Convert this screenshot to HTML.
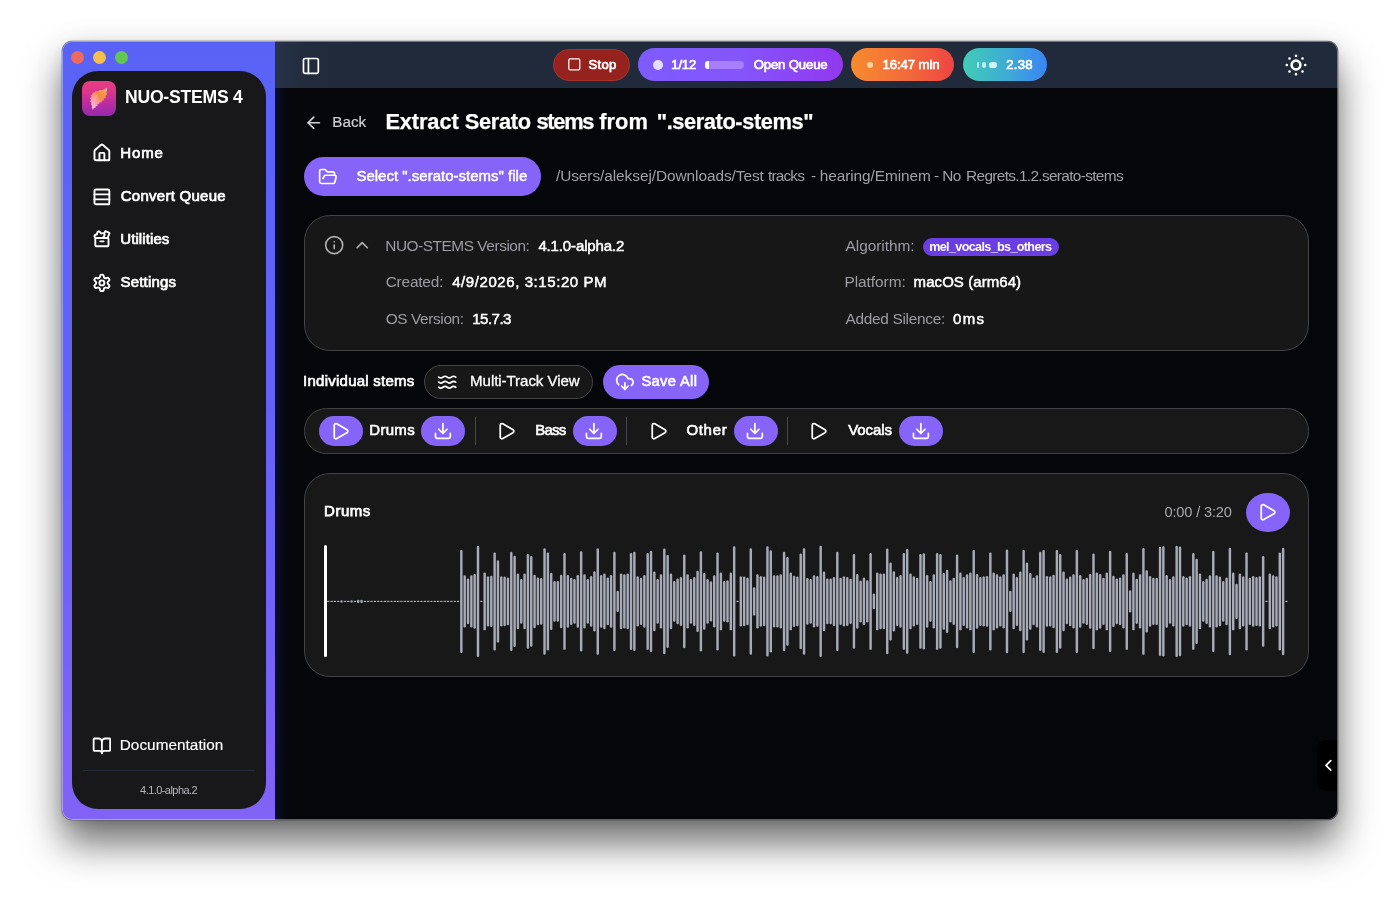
<!DOCTYPE html>
<html lang="en"><head><meta charset="utf-8"><title>NUO-STEMS 4</title>
<style>
html,body{margin:0;padding:0;background:#fff;}
body{width:1400px;height:901px;position:relative;overflow:hidden;font-family:"Liberation Sans",sans-serif;}
#sh{position:absolute;left:62px;top:41px;width:1276.4px;height:779px;border-radius:10.5px;background:#555;
 box-shadow:0 0 0 0.6px rgba(0,0,0,.3),0 24px 38px 0 rgba(0,0,0,.55),0 3px 10px rgba(0,0,0,.10),0 0 34px rgba(0,0,0,.05);}
#w{will-change:transform;position:absolute;left:0;top:0;width:1400px;height:901px;clip-path:inset(41px 62px 81px 62px round 10.5px);}
.b,.i,.t{position:absolute;}
.b{box-sizing:border-box;}
.t{white-space:nowrap;line-height:1;transform:translateY(-50%);}
</style></head>
<body>
<div id="sh"></div>
<div id="w">
<div class="b" style="left:62px;top:41px;width:1278px;height:780px;background:#050609;"></div>
<div class="b" style="left:275px;top:88px;width:18px;height:732px;background:linear-gradient(90deg,#0b0f34 0,#080b1f 22%,#06070e 60%,#050609 100%);"></div>
<div class="b" style="left:62px;top:41px;width:213px;height:779px;background:linear-gradient(180deg,#5a62f6 0,#6362f6 45%,#8163f5 100%);"></div>
<div class="b" style="left:275px;top:41px;width:1065px;height:47px;background:linear-gradient(90deg,#27324a 0,#222b3c 3%,#212a3a 8%);"></div>
<div class="b" style="left:71.10000000000001px;top:51.1px;width:13.2px;height:13.2px;border-radius:50%;background:#ed6a5f;"></div>
<div class="b" style="left:93.2px;top:51.1px;width:13.2px;height:13.2px;border-radius:50%;background:#f5bf4f;"></div>
<div class="b" style="left:115.30000000000001px;top:51.1px;width:13.2px;height:13.2px;border-radius:50%;background:#62c554;"></div>
<div class="b" style="left:72px;top:71px;width:193.5px;height:738px;background:#18181b;border-radius:26px;"></div>
<div class="b" style="left:82.4px;top:81px;width:33.7px;height:34.8px;border-radius:8px;background:linear-gradient(178deg,#ec3c80 0,#d83590 35%,#b52ca2 68%,#9229ae 100%);"></div>
<svg class="i" style="left:82.4px;top:81px" width="34" height="35" viewBox="0 0 34 35"><defs><linearGradient id="lf" x1="0.1" y1="1" x2="0.9" y2="0"><stop offset="0" stop-color="#ffd9f0"/><stop offset=".3" stop-color="#ff9fb4"/><stop offset=".62" stop-color="#f58a3a"/><stop offset=".9" stop-color="#f2a25e"/><stop offset="1" stop-color="#9ad0a4"/></linearGradient><filter id="lb" x="-20%" y="-20%" width="140%" height="140%"><feGaussianBlur stdDeviation=".45"/></filter></defs><path filter="url(#lb)" d="M24.600 6.600 L22 8.400 19 9.200 17.400 9 16.600 10 13.200 10.300 12.600 11.600 10.800 11.800 10.400 13.600 8.800 14.400 9.600 15.800 8 17.400 9.200 18.600 8.200 20.400 9.600 21.600 9 23.400 10.200 24.600 10 26.600 10.700 29 12 26.600 13.200 27.200 13.800 25 15.200 25.200 15.600 23 17.200 23 17.600 21.200 19.400 21.400 20 19.800 21.800 19.400 22 17.600 23.800 16.800 23.600 14.800 25 13.400 24.400 11.600 25.200 9.800z" fill="url(#lf)"/><path d="M15.500 13.500c-1.600 2-2.800 5-3.400 8.500" stroke="#f7c6c0" stroke-width=".9" fill="none" opacity=".7" stroke-linecap="round"/></svg>
<span class="t" id="t1" style="left:124.95px;top:98.31px;font-size:17.6px;color:#fff;font-weight:700;letter-spacing:-0.23px;">NUO-STEMS 4</span>
<svg class="i" style="left:91.5px;top:143.4px" width="19.8" height="19.8" viewBox="0 0 24 24" fill="none" stroke="#fff" stroke-width="2.3" stroke-linecap="round" stroke-linejoin="round"><path d="M15 21v-8a1 1 0 0 0-1-1h-4a1 1 0 0 0-1 1v8"/><path d="M3 10a2 2 0 0 1 .709-1.528l7-5.999a2 2 0 0 1 2.582 0l7 5.999A2 2 0 0 1 21 10v9a2 2 0 0 1-2 2H5a2 2 0 0 1-2-2z"/></svg>
<span class="t" id="t2" style="left:120.13px;top:151.78px;font-size:15.0px;color:#fff;letter-spacing:0.934px;-webkit-text-stroke:0.7px #fff;">Home</span>
<svg class="i" style="left:91.5px;top:186.6px" width="19.8" height="19.8" viewBox="0 0 24 24" fill="none" stroke="#fff" stroke-width="2.3" stroke-linecap="round" stroke-linejoin="round"><rect width="18" height="18" x="3" y="3" rx="2"/><path d="M21 9H3"/><path d="M21 15H3"/></svg>
<span class="t" id="t3" style="left:120.69px;top:194.78px;font-size:15.0px;color:#fff;letter-spacing:0.267px;-webkit-text-stroke:0.7px #fff;">Convert Queue</span>
<svg class="i" style="left:91.5px;top:229.4px" width="19.8" height="19.8" viewBox="0 0 24 24" fill="none" stroke="#fff" stroke-width="2.3" stroke-linecap="round" stroke-linejoin="round"><path d="M10 15h4"/><path d="m14.817 10.995-.971-1.450 1.034-1.232a2 2 0 0 0-2.025-3.238l-1.820.364L9.910 3.885a2 2 0 0 0-3.625.748L6.141 6.550l-1.725.426a2 2 0 0 0-.190 3.756l.657.270"/><path d="m18.822 10.995 2.260-5.380a1 1 0 0 0-.557-1.318L16.954 2.900a1 1 0 0 0-1.281.533l-.924 2.122"/><path d="M4 12.006A1 1 0 0 1 4.994 11H19a1 1 0 0 1 1 1v7a2 2 0 0 1-2 2H6a2 2 0 0 1-2-2z"/></svg>
<span class="t" id="t4" style="left:120.23px;top:237.98px;font-size:15.0px;color:#fff;letter-spacing:0.098px;-webkit-text-stroke:0.7px #fff;">Utilities</span>
<svg class="i" style="left:91.5px;top:272.8px" width="19.8" height="19.8" viewBox="0 0 24 24" fill="none" stroke="#fff" stroke-width="2.3" stroke-linecap="round" stroke-linejoin="round"><path d="M12.22 2h-.44a2 2 0 0 0-2 2v.18a2 2 0 0 1-1 1.730l-.43.250a2 2 0 0 1-2 0l-.15-.080a2 2 0 0 0-2.730.730l-.22.380a2 2 0 0 0 .730 2.730l.15.100a2 2 0 0 1 1 1.720v.510a2 2 0 0 1-1 1.740l-.15.090a2 2 0 0 0-.730 2.730l.22.380a2 2 0 0 0 2.730.730l.15-.080a2 2 0 0 1 2 0l.43.250a2 2 0 0 1 1 1.730V20a2 2 0 0 0 2 2h.44a2 2 0 0 0 2-2v-.18a2 2 0 0 1 1-1.730l.43-.250a2 2 0 0 1 2 0l.15.080a2 2 0 0 0 2.730-.730l.22-.390a2 2 0 0 0-.730-2.730l-.15-.080a2 2 0 0 1-1-1.740v-.500a2 2 0 0 1 1-1.740l.15-.090a2 2 0 0 0 .730-2.730l-.22-.380a2 2 0 0 0-2.730-.730l-.15.080a2 2 0 0 1-2 0l-.43-.250a2 2 0 0 1-1-1.730V4a2 2 0 0 0-2-2z"/><circle cx="12" cy="12" r="3"/></svg>
<span class="t" id="t5" style="left:120.61px;top:281.18px;font-size:15.0px;color:#fff;letter-spacing:0.16px;-webkit-text-stroke:0.7px #fff;">Settings</span>
<svg class="i" style="left:91.55px;top:735.65px" width="19.8" height="19.8" viewBox="0 0 24 24" fill="none" stroke="#fff" stroke-width="2.2" stroke-linecap="round" stroke-linejoin="round"><path d="M12 7v14"/><path d="M3 18a1 1 0 0 1-1-1V4a1 1 0 0 1 1-1h5a4 4 0 0 1 4 4 4 4 0 0 1 4-4h5a1 1 0 0 1 1 1v13a1 1 0 0 1-1 1h-6a3 3 0 0 0-3 3 3 3 0 0 0-3-3z"/></svg>
<span class="t" id="t6" style="left:119.74px;top:745.1px;font-size:15.3px;color:#fff;letter-spacing:0.051px;-webkit-text-stroke:0.15px #fff;">Documentation</span>
<div class="b" style="left:83px;top:770.4px;width:172px;height:1.1px;background:#242b3a;"></div>
<span class="t" id="t7" style="left:140.1px;top:789.91px;font-size:11px;color:#b4b4bb;letter-spacing:-0.558px;">4.1.0-alpha.2</span>
<svg class="i" style="left:301.1px;top:55.5px" width="19.8" height="19.8" viewBox="0 0 24 24" fill="none" stroke="#fff" stroke-width="2.05" stroke-linecap="round" stroke-linejoin="round"><rect width="18" height="18" x="3" y="3" rx="2"/><path d="M9 3v18"/></svg>
<div class="b" style="left:553.3px;top:49px;width:76.3px;height:31.8px;border-radius:16px;background:#96221e;border:1px solid #a9312b;"></div>
<svg class="i" style="left:566.6px;top:57.2px" width="14.6" height="14.6" viewBox="0 0 24 24" fill="none" stroke="#fff" stroke-width="2.05" stroke-linecap="round" stroke-linejoin="round"><rect width="18" height="18" x="3" y="3" rx="2"/></svg>
<span class="t" id="t8" style="left:588.61px;top:64.83px;font-size:13.1px;color:#fff;letter-spacing:0.268px;-webkit-text-stroke:0.7px #fff;">Stop</span>
<div class="b" style="left:638px;top:48px;width:204.5px;height:33.4px;border-radius:17px;background:linear-gradient(90deg,#7e5bff 0,#8455fb 50%,#9238ee 100%);"></div>
<div class="b" style="left:652.6px;top:60.2px;width:10px;height:10px;border-radius:50%;background:#e6defe;"></div>
<span class="t" id="t9" style="left:671.34px;top:64.83px;font-size:13.1px;color:#fff;letter-spacing:-0.21px;-webkit-text-stroke:0.7px #fff;">1/12</span>
<div class="b" style="left:705.2px;top:61.2px;width:39px;height:7.8px;border-radius:4px;background:#a77efc;"></div>
<div class="b" style="left:705.2px;top:61.2px;width:4.2px;height:7.8px;border-radius:4px 1px 1px 4px;background:#fff;"></div>
<span class="t" id="t10" style="left:753.7px;top:64.83px;font-size:13.1px;color:#fff;letter-spacing:-0.119px;-webkit-text-stroke:0.7px #fff;">Open Queue</span>
<div class="b" style="left:851px;top:48.4px;width:103px;height:32.6px;border-radius:17px;background:linear-gradient(90deg,#f78b2f 0,#f26a3b 55%,#ee4543 100%);"></div>
<div class="b" style="left:866.5px;top:61.6px;width:6.9px;height:6.9px;border-radius:50%;background:#fdd3a6;"></div>
<span class="t" id="t11" style="left:882.5px;top:64.83px;font-size:13.1px;color:#fff;letter-spacing:-0.05px;-webkit-text-stroke:0.7px #fff;">16:47 min</span>
<div class="b" style="left:962.7px;top:48.4px;width:84.6px;height:32.6px;border-radius:17px;background:linear-gradient(90deg,#41ccb6 0,#3eaad6 55%,#3b84f5 100%);"></div>
<div class="b" style="left:977.3px;top:62.2px;width:1.8px;height:5.6px;border-radius:1px;background:#a9ecee;"></div>
<div class="b" style="left:981.6px;top:62.2px;width:4.4px;height:5.6px;border-radius:2.5px;background:#bff1f3;"></div>
<div class="b" style="left:988.8px;top:62.2px;width:7.8px;height:5.6px;border-radius:2.8px;background:#d4f6f8;"></div>
<span class="t" id="t12" style="left:1006.33px;top:64.83px;font-size:13.1px;color:#fff;letter-spacing:0.235px;-webkit-text-stroke:0.7px #fff;">2.38</span>
<svg class="i" style="left:1282.7px;top:51.5px" width="26" height="26" viewBox="0 0 26 26" fill="none" stroke="#fff" stroke-linecap="round"><circle cx="13" cy="13" r="4.400" stroke-width="2.600"/><g stroke-width="2.700"><path d="M13 3.800h.01M13 22.200h.01M3.800 13h.01M22.200 13h.01M6.500 6.500h.01M19.500 6.500h.01M6.500 19.500h.01M19.500 19.500h.01"/></g></svg>
<svg class="i" style="left:303.75px;top:112.85px" width="19.5" height="19.5" viewBox="0 0 24 24" fill="none" stroke="#d4d4d8" stroke-width="2.05" stroke-linecap="round" stroke-linejoin="round"><path d="m12 19-7-7 7-7"/><path d="M19 12H5"/></svg>
<span class="t" id="t13" style="left:332.23px;top:121.91px;font-size:15.2px;color:#d0d0d5;letter-spacing:0.063px;-webkit-text-stroke:0.2px #d0d0d5;">Back</span>
<span class="g"><span class="t" id="t14" style="left:385.42px;top:122.33px;font-size:21.8px;color:#fff;font-weight:700;letter-spacing:-0.11px;-webkit-text-stroke:0.25px #fff;">Extract</span> <span class="t" id="t15" style="left:464.73px;top:122.32px;font-size:21.8px;color:#fff;font-weight:700;letter-spacing:-0.281px;-webkit-text-stroke:0.25px #fff;">Serato</span> <span class="t" id="t16" style="left:536.56px;top:122.33px;font-size:21.8px;color:#fff;font-weight:700;letter-spacing:-1.306px;-webkit-text-stroke:0.25px #fff;">stems</span> <span class="t" id="t17" style="left:599.16px;top:122.32px;font-size:21.8px;color:#fff;font-weight:700;letter-spacing:0.098px;-webkit-text-stroke:0.25px #fff;">from</span> <span class="t" id="t18" style="left:656.8px;top:122.33px;font-size:21.8px;color:#fff;font-weight:700;letter-spacing:-0.409px;-webkit-text-stroke:0.25px #fff;">".serato-stems"</span></span>
<div class="b" style="left:304px;top:157px;width:236.8px;height:38.5px;border-radius:20px;background:#8664f7;"></div>
<svg class="i" style="left:317.95px;top:166.5px" width="19.8" height="19.8" viewBox="0 0 24 24" fill="none" stroke="#fff" stroke-width="2.05" stroke-linecap="round" stroke-linejoin="round"><path d="m6 14 1.500-2.900A2 2 0 0 1 9.240 10H20a2 2 0 0 1 1.940 2.500l-1.540 6a2 2 0 0 1-1.950 1.500H4a2 2 0 0 1-2-2V5a2 2 0 0 1 2-2h3.900a2 2 0 0 1 1.690.900l.810 1.200a2 2 0 0 0 1.670.900H18a2 2 0 0 1 2 2v2"/></svg>
<span class="t" id="t19" style="left:356.39px;top:174.96px;font-size:15.0px;color:#fff;letter-spacing:0.007px;-webkit-text-stroke:0.45px #fff;">Select ".serato-stems" file</span>
<span class="g"><span class="t" id="t20" style="left:555.93px;top:176.05px;font-size:15.4px;color:#a0a0a6;letter-spacing:-0.059px;">/Users/aleksej/Downloads/Test</span> <span class="t" id="t21" style="left:768.08px;top:176.05px;font-size:15.4px;color:#a0a0a6;letter-spacing:-0.84px;">tracks</span> <span class="t" id="t22" style="left:810.97px;top:176.05px;font-size:15.4px;color:#a0a0a6;">-</span> <span class="t" id="t23" style="left:819.73px;top:176.05px;font-size:15.4px;color:#a0a0a6;letter-spacing:-0.071px;">hearing/Eminem</span> <span class="t" id="t24" style="left:933.94px;top:176.05px;font-size:15.4px;color:#a0a0a6;">-</span> <span class="t" id="t25" style="left:942.33px;top:176.05px;font-size:15.4px;color:#a0a0a6;letter-spacing:-0.675px;">No</span> <span class="t" id="t26" style="left:966.04px;top:176.05px;font-size:15.4px;color:#a0a0a6;letter-spacing:-0.662px;">Regrets.1.2.serato-stems</span></span>
<div class="b" style="left:304px;top:214.5px;width:1004.8px;height:136px;border-radius:26px;background:#171717;border:1.2px solid #434346;"></div>
<svg class="i" style="left:323.6px;top:234.55px" width="20.4" height="20.4" viewBox="0 0 24 24" fill="none" stroke="#adadb0" stroke-width="1.95" stroke-linecap="round" stroke-linejoin="round"><circle cx="12" cy="12" r="10"/><path d="M12 16v-4"/><path d="M12 8h.01"/></svg>
<svg class="i" style="left:352.3px;top:234.55px" width="20.4" height="20.4" viewBox="0 0 24 24" fill="none" stroke="#adadb0" stroke-width="2.05" stroke-linecap="round" stroke-linejoin="round"><path d="m18 15-6-6-6 6"/></svg>
<span class="t" id="t27" style="left:385.23px;top:245.77px;font-size:15.4px;color:#9c9ca3;letter-spacing:-0.447px;">NUO-STEMS Version:</span>
<span class="t" id="t28" style="left:538.39px;top:244.78px;font-size:15.0px;color:#fff;letter-spacing:-0.134px;-webkit-text-stroke:0.5px #fff;">4.1.0-alpha.2</span>
<span class="t" id="t29" style="left:845.5px;top:245.77px;font-size:15.4px;color:#9c9ca3;letter-spacing:-0.015px;">Algorithm:</span>
<span class="t" id="t30" style="left:385.67px;top:281.97px;font-size:15.4px;color:#9c9ca3;letter-spacing:-0.184px;">Created:</span>
<span class="t" id="t31" style="left:452.18px;top:280.98px;font-size:15.0px;color:#fff;letter-spacing:0.578px;-webkit-text-stroke:0.5px #fff;">4/9/2026, 3:15:20 PM</span>
<span class="t" id="t32" style="left:844.48px;top:281.97px;font-size:15.4px;color:#9c9ca3;letter-spacing:-0.04px;">Platform:</span>
<span class="t" id="t33" style="left:913.6px;top:280.98px;font-size:15.0px;color:#fff;letter-spacing:0.069px;-webkit-text-stroke:0.5px #fff;">macOS (arm64)</span>
<span class="t" id="t34" style="left:385.71px;top:319.17px;font-size:15.4px;color:#9c9ca3;letter-spacing:-0.382px;">OS Version:</span>
<span class="t" id="t35" style="left:472.23px;top:318.16px;font-size:15.0px;color:#fff;letter-spacing:-0.503px;-webkit-text-stroke:0.5px #fff;">15.7.3</span>
<span class="t" id="t36" style="left:845.5px;top:319.17px;font-size:15.4px;color:#9c9ca3;letter-spacing:-0.294px;">Added Silence:</span>
<span class="t" id="t37" style="left:953.02px;top:318.17px;font-size:15.0px;color:#fff;letter-spacing:1.276px;-webkit-text-stroke:0.5px #fff;">0ms</span>
<div class="b" style="left:922.9px;top:238.2px;width:135.8px;height:17.6px;border-radius:9px;background:#6a3ee2;"></div>
<span class="t" id="t38" style="left:929.16px;top:246.85px;font-size:12.6px;color:#fff;font-weight:700;letter-spacing:-0.643px;">mel_vocals_bs_others</span>
<span class="t" id="t39" style="left:303.09px;top:379.75px;font-size:15.0px;color:#fff;letter-spacing:0.242px;-webkit-text-stroke:0.65px #fff;">Individual stems</span>
<div class="b" style="left:424px;top:365px;width:169px;height:33.6px;border-radius:17px;background:#171718;border:1.2px solid #434346;"></div>
<svg class="i" style="left:436.7px;top:371.65px" width="20.4" height="20.4" viewBox="0 0 24 24" fill="none" stroke="#fff" stroke-width="2.05" stroke-linecap="round" stroke-linejoin="round"><path d="M2 6c.6.5 1.200 1 2.500 1C7 7 7 5 9.500 5c2.600 0 2.400 2 5 2 2.500 0 2.500-2 5-2 1.300 0 1.900.5 2.500 1"/><path d="M2 12c.6.5 1.200 1 2.500 1 2.500 0 2.500-2 5-2 2.600 0 2.400 2 5 2 2.500 0 2.500-2 5-2 1.300 0 1.900.5 2.500 1"/><path d="M2 18c.6.5 1.200 1 2.500 1 2.500 0 2.500-2 5-2 2.600 0 2.400 2 5 2 2.500 0 2.500-2 5-2 1.300 0 1.900.5 2.500 1"/></svg>
<span class="t" id="t40" style="left:470.07px;top:381.01px;font-size:15.1px;color:#fff;letter-spacing:-0.071px;-webkit-text-stroke:0.3px #fff;">Multi-Track View</span>
<div class="b" style="left:603px;top:365px;width:105.5px;height:33.6px;border-radius:17px;background:#8664f7;"></div>
<svg class="i" style="left:615.1px;top:372.1px" width="19.8" height="19.8" viewBox="0 0 24 24" fill="none" stroke="#fff" stroke-width="2.05" stroke-linecap="round" stroke-linejoin="round"><path d="M12 13v8l-4-4"/><path d="m12 21 4-4"/><path d="M4.393 15.269A7 7 0 1 1 15.710 8h1.790a4.500 4.500 0 0 1 2.436 8.284"/></svg>
<span class="t" id="t41" style="left:641.42px;top:380.88px;font-size:14.7px;color:#fff;letter-spacing:0.361px;-webkit-text-stroke:0.55px #fff;">Save All</span>
<div class="b" style="left:304px;top:408.4px;width:1004.8px;height:45.6px;border-radius:22.5px;background:#181818;border:1.2px solid #434346;"></div>
<div class="b" style="left:319px;top:416px;width:43.5px;height:30px;border-radius:15px;background:#8664f7;"></div>
<svg class="i" style="left:330.3px;top:420.6px" width="20.4" height="20.4" viewBox="0 0 24 24" fill="none" stroke="#fff" stroke-width="2.05" stroke-linecap="round" stroke-linejoin="round"><path d="M5 5a2 2 0 0 1 3.008-1.728l11.997 6.998a2 2 0 0 1 .003 3.458l-12 7A2 2 0 0 1 5 19z"/></svg>
<span class="t" id="t42" style="left:369.24px;top:429.36px;font-size:15.0px;color:#fff;letter-spacing:0.318px;-webkit-text-stroke:0.6px #fff;">Drums</span>
<div class="b" style="left:421.2px;top:416px;width:44px;height:30px;border-radius:15px;background:#8664f7;"></div>
<svg class="i" style="left:432.75px;top:421px" width="19.8" height="19.8" viewBox="0 0 24 24" fill="none" stroke="#fff" stroke-width="2.05" stroke-linecap="round" stroke-linejoin="round"><path d="M21 15v4a2 2 0 0 1-2 2H5a2 2 0 0 1-2-2v-4"/><polyline points="7 10 12 15 17 10"/><line x1="12" x2="12" y1="15" y2="3"/></svg>
<svg class="i" style="left:496.3px;top:420.6px" width="20.4" height="20.4" viewBox="0 0 24 24" fill="none" stroke="#fff" stroke-width="2.05" stroke-linecap="round" stroke-linejoin="round"><path d="M5 5a2 2 0 0 1 3.008-1.728l11.997 6.998a2 2 0 0 1 .003 3.458l-12 7A2 2 0 0 1 5 19z"/></svg>
<span class="t" id="t43" style="left:535.24px;top:429.36px;font-size:15.0px;color:#fff;letter-spacing:-0.813px;-webkit-text-stroke:0.6px #fff;">Bass</span>
<div class="b" style="left:572.6px;top:416px;width:44px;height:30px;border-radius:15px;background:#8664f7;"></div>
<svg class="i" style="left:584.15px;top:421px" width="19.8" height="19.8" viewBox="0 0 24 24" fill="none" stroke="#fff" stroke-width="2.05" stroke-linecap="round" stroke-linejoin="round"><path d="M21 15v4a2 2 0 0 1-2 2H5a2 2 0 0 1-2-2v-4"/><polyline points="7 10 12 15 17 10"/><line x1="12" x2="12" y1="15" y2="3"/></svg>
<svg class="i" style="left:647.6999999999999px;top:420.6px" width="20.4" height="20.4" viewBox="0 0 24 24" fill="none" stroke="#fff" stroke-width="2.05" stroke-linecap="round" stroke-linejoin="round"><path d="M5 5a2 2 0 0 1 3.008-1.728l11.997 6.998a2 2 0 0 1 .003 3.458l-12 7A2 2 0 0 1 5 19z"/></svg>
<span class="t" id="t44" style="left:686.38px;top:429.35px;font-size:15.0px;color:#fff;letter-spacing:0.696px;-webkit-text-stroke:0.6px #fff;">Other</span>
<div class="b" style="left:733.6px;top:416px;width:44px;height:30px;border-radius:15px;background:#8664f7;"></div>
<svg class="i" style="left:745.15px;top:421px" width="19.8" height="19.8" viewBox="0 0 24 24" fill="none" stroke="#fff" stroke-width="2.05" stroke-linecap="round" stroke-linejoin="round"><path d="M21 15v4a2 2 0 0 1-2 2H5a2 2 0 0 1-2-2v-4"/><polyline points="7 10 12 15 17 10"/><line x1="12" x2="12" y1="15" y2="3"/></svg>
<svg class="i" style="left:808.3px;top:420.6px" width="20.4" height="20.4" viewBox="0 0 24 24" fill="none" stroke="#fff" stroke-width="2.05" stroke-linecap="round" stroke-linejoin="round"><path d="M5 5a2 2 0 0 1 3.008-1.728l11.997 6.998a2 2 0 0 1 .003 3.458l-12 7A2 2 0 0 1 5 19z"/></svg>
<span class="t" id="t45" style="left:848.25px;top:429.36px;font-size:15.0px;color:#fff;letter-spacing:-0.083px;-webkit-text-stroke:0.6px #fff;">Vocals</span>
<div class="b" style="left:899px;top:416px;width:44px;height:30px;border-radius:15px;background:#8664f7;"></div>
<svg class="i" style="left:910.55px;top:421px" width="19.8" height="19.8" viewBox="0 0 24 24" fill="none" stroke="#fff" stroke-width="2.05" stroke-linecap="round" stroke-linejoin="round"><path d="M21 15v4a2 2 0 0 1-2 2H5a2 2 0 0 1-2-2v-4"/><polyline points="7 10 12 15 17 10"/><line x1="12" x2="12" y1="15" y2="3"/></svg>
<div class="b" style="left:474.6px;top:416.5px;width:1.3px;height:28.5px;background:#47474d;"></div>
<div class="b" style="left:626px;top:416.5px;width:1.3px;height:28.5px;background:#47474d;"></div>
<div class="b" style="left:786.6px;top:416.5px;width:1.3px;height:28.5px;background:#47474d;"></div>
<div class="b" style="left:304px;top:472.8px;width:1004.8px;height:203.8px;border-radius:26px;background:#181818;border:1.2px solid #434346;"></div>
<span class="t" id="t46" style="left:324.08px;top:509.65px;font-size:15.0px;color:#fff;letter-spacing:0.505px;-webkit-text-stroke:0.75px #fff;">Drums</span>
<span class="t" id="t47" style="left:1164.41px;top:511.62px;font-size:14.6px;color:#a8a8ae;letter-spacing:-0.143px;">0:00 / 3:20</span>
<div class="b" style="left:1245.5px;top:492.6px;width:44px;height:39.8px;border-radius:50%;background:#8664f7;"></div>
<svg class="i" style="left:1256.8px;top:501.9px" width="20.4" height="20.4" viewBox="0 0 24 24" fill="none" stroke="#fff" stroke-width="2.05" stroke-linecap="round" stroke-linejoin="round"><path d="M5 5a2 2 0 0 1 3.008-1.728l11.997 6.998a2 2 0 0 1 .003 3.458l-12 7A2 2 0 0 1 5 19z"/></svg>
<svg class="i" style="left:304px;top:540px" width="1004" height="124" viewBox="0 0 1004 124" fill="#a7abb8"><rect x="23.05" y="60.73" width="2.45" height="1.34" rx="0.67"/><rect x="26.38" y="60.73" width="2.45" height="1.34" rx="0.67"/><rect x="29.71" y="60.73" width="2.45" height="1.34" rx="0.67"/><rect x="33.04" y="60.73" width="2.45" height="1.34" rx="0.67"/><rect x="36.36" y="60.17" width="2.45" height="2.45" rx="1.23"/><rect x="39.69" y="60.73" width="2.45" height="1.34" rx="0.67"/><rect x="43.02" y="60.73" width="2.45" height="1.34" rx="0.67"/><rect x="46.34" y="60.17" width="2.45" height="2.45" rx="1.23"/><rect x="49.67" y="60.73" width="2.45" height="1.34" rx="0.67"/><rect x="53.00" y="59.73" width="2.45" height="3.34" rx="1.23"/><rect x="56.32" y="59.73" width="2.45" height="3.34" rx="1.23"/><rect x="59.65" y="60.73" width="2.45" height="1.34" rx="0.67"/><rect x="62.98" y="60.73" width="2.45" height="1.34" rx="0.67"/><rect x="66.31" y="60.73" width="2.45" height="1.34" rx="0.67"/><rect x="69.63" y="60.73" width="2.45" height="1.34" rx="0.67"/><rect x="72.96" y="60.73" width="2.45" height="1.34" rx="0.67"/><rect x="76.29" y="60.73" width="2.45" height="1.34" rx="0.67"/><rect x="79.61" y="60.73" width="2.45" height="1.34" rx="0.67"/><rect x="82.94" y="60.73" width="2.45" height="1.34" rx="0.67"/><rect x="86.27" y="60.73" width="2.45" height="1.34" rx="0.67"/><rect x="89.59" y="60.73" width="2.45" height="1.34" rx="0.67"/><rect x="92.92" y="60.73" width="2.45" height="1.34" rx="0.67"/><rect x="96.25" y="60.73" width="2.45" height="1.34" rx="0.67"/><rect x="99.58" y="60.73" width="2.45" height="1.34" rx="0.67"/><rect x="102.90" y="60.73" width="2.45" height="1.34" rx="0.67"/><rect x="106.23" y="60.73" width="2.45" height="1.34" rx="0.67"/><rect x="109.56" y="60.73" width="2.45" height="1.34" rx="0.67"/><rect x="112.88" y="60.73" width="2.45" height="1.34" rx="0.67"/><rect x="116.21" y="60.73" width="2.45" height="1.34" rx="0.67"/><rect x="119.54" y="60.73" width="2.45" height="1.34" rx="0.67"/><rect x="122.86" y="60.73" width="2.45" height="1.34" rx="0.67"/><rect x="126.19" y="60.73" width="2.45" height="1.34" rx="0.67"/><rect x="129.52" y="60.73" width="2.45" height="1.34" rx="0.67"/><rect x="132.85" y="60.73" width="2.45" height="1.34" rx="0.67"/><rect x="136.17" y="60.73" width="2.45" height="1.34" rx="0.67"/><rect x="139.50" y="60.73" width="2.45" height="1.34" rx="0.67"/><rect x="142.83" y="60.73" width="2.45" height="1.34" rx="0.67"/><rect x="146.15" y="60.73" width="2.45" height="1.34" rx="0.67"/><rect x="149.48" y="60.73" width="2.45" height="1.34" rx="0.67"/><rect x="152.81" y="60.73" width="2.45" height="1.34" rx="0.67"/><rect x="156.13" y="9.88" width="2.45" height="103.05" rx="1.23"/><rect x="159.46" y="35.22" width="2.45" height="52.36" rx="1.23"/><rect x="162.79" y="38.56" width="2.45" height="45.67" rx="1.23"/><rect x="166.12" y="35.22" width="2.45" height="52.36" rx="1.23"/><rect x="169.44" y="34.11" width="2.45" height="54.59" rx="1.23"/><rect x="172.77" y="5.70" width="2.45" height="111.40" rx="1.23"/><rect x="176.10" y="60.73" width="2.45" height="1.34" rx="0.67"/><rect x="179.42" y="32.44" width="2.45" height="57.93" rx="1.23"/><rect x="182.75" y="36.33" width="2.45" height="50.13" rx="1.23"/><rect x="186.08" y="35.78" width="2.45" height="51.24" rx="1.23"/><rect x="189.40" y="12.38" width="2.45" height="98.03" rx="1.23"/><rect x="192.73" y="20.18" width="2.45" height="82.44" rx="1.23"/><rect x="196.06" y="36.33" width="2.45" height="50.13" rx="1.23"/><rect x="199.39" y="36.61" width="2.45" height="49.57" rx="1.23"/><rect x="202.71" y="37.45" width="2.45" height="47.90" rx="1.23"/><rect x="206.04" y="11.83" width="2.45" height="99.15" rx="1.23"/><rect x="209.37" y="15.73" width="2.45" height="91.35" rx="1.23"/><rect x="212.69" y="33.55" width="2.45" height="55.70" rx="1.23"/><rect x="216.02" y="39.12" width="2.45" height="44.56" rx="1.23"/><rect x="219.35" y="33.55" width="2.45" height="55.70" rx="1.23"/><rect x="222.67" y="14.05" width="2.45" height="94.69" rx="1.23"/><rect x="226.00" y="16.00" width="2.45" height="90.79" rx="1.23"/><rect x="229.33" y="34.66" width="2.45" height="53.47" rx="1.23"/><rect x="232.66" y="37.45" width="2.45" height="47.90" rx="1.23"/><rect x="235.98" y="38.01" width="2.45" height="46.79" rx="1.23"/><rect x="239.31" y="8.15" width="2.45" height="106.50" rx="1.23"/><rect x="242.64" y="12.38" width="2.45" height="98.03" rx="1.23"/><rect x="245.96" y="32.71" width="2.45" height="57.37" rx="1.23"/><rect x="249.29" y="41.07" width="2.45" height="40.66" rx="1.23"/><rect x="252.62" y="41.07" width="2.45" height="40.66" rx="1.23"/><rect x="255.94" y="34.66" width="2.45" height="53.47" rx="1.23"/><rect x="259.27" y="12.94" width="2.45" height="96.92" rx="1.23"/><rect x="262.60" y="34.94" width="2.45" height="52.91" rx="1.23"/><rect x="265.93" y="37.73" width="2.45" height="47.34" rx="1.23"/><rect x="269.25" y="39.12" width="2.45" height="44.56" rx="1.23"/><rect x="272.58" y="34.94" width="2.45" height="52.91" rx="1.23"/><rect x="275.91" y="11.27" width="2.45" height="100.26" rx="1.23"/><rect x="279.23" y="34.27" width="2.45" height="54.25" rx="1.23"/><rect x="282.56" y="39.12" width="2.45" height="44.56" rx="1.23"/><rect x="285.89" y="36.06" width="2.45" height="50.69" rx="1.23"/><rect x="289.21" y="31.32" width="2.45" height="60.16" rx="1.23"/><rect x="292.54" y="8.15" width="2.45" height="106.50" rx="1.23"/><rect x="295.87" y="34.94" width="2.45" height="52.91" rx="1.23"/><rect x="299.20" y="33.55" width="2.45" height="55.70" rx="1.23"/><rect x="302.52" y="37.45" width="2.45" height="47.90" rx="1.23"/><rect x="305.85" y="34.94" width="2.45" height="52.91" rx="1.23"/><rect x="309.18" y="11.83" width="2.45" height="99.15" rx="1.23"/><rect x="312.50" y="50.82" width="2.45" height="21.17" rx="1.23"/><rect x="315.83" y="33.55" width="2.45" height="55.70" rx="1.23"/><rect x="319.16" y="34.27" width="2.45" height="54.25" rx="1.23"/><rect x="322.49" y="33.55" width="2.45" height="55.70" rx="1.23"/><rect x="325.81" y="12.94" width="2.45" height="96.92" rx="1.23"/><rect x="329.14" y="11.83" width="2.45" height="99.15" rx="1.23"/><rect x="332.47" y="36.33" width="2.45" height="50.13" rx="1.23"/><rect x="335.79" y="37.73" width="2.45" height="47.34" rx="1.23"/><rect x="339.12" y="34.94" width="2.45" height="52.91" rx="1.23"/><rect x="342.45" y="12.94" width="2.45" height="96.92" rx="1.23"/><rect x="345.77" y="10.71" width="2.45" height="101.37" rx="1.23"/><rect x="349.10" y="31.60" width="2.45" height="59.60" rx="1.23"/><rect x="352.43" y="39.12" width="2.45" height="44.56" rx="1.23"/><rect x="355.75" y="34.27" width="2.45" height="54.25" rx="1.23"/><rect x="359.08" y="8.49" width="2.45" height="105.83" rx="1.23"/><rect x="362.41" y="14.89" width="2.45" height="93.02" rx="1.23"/><rect x="365.74" y="33.55" width="2.45" height="55.70" rx="1.23"/><rect x="369.06" y="41.07" width="2.45" height="40.66" rx="1.23"/><rect x="372.39" y="38.56" width="2.45" height="45.67" rx="1.23"/><rect x="375.72" y="36.89" width="2.45" height="49.02" rx="1.23"/><rect x="379.04" y="14.61" width="2.45" height="93.58" rx="1.23"/><rect x="382.37" y="34.27" width="2.45" height="54.25" rx="1.23"/><rect x="385.70" y="39.12" width="2.45" height="44.56" rx="1.23"/><rect x="389.02" y="36.89" width="2.45" height="49.02" rx="1.23"/><rect x="392.35" y="30.76" width="2.45" height="61.27" rx="1.23"/><rect x="395.68" y="11.27" width="2.45" height="100.26" rx="1.23"/><rect x="399.01" y="32.99" width="2.45" height="56.81" rx="1.23"/><rect x="402.33" y="39.12" width="2.45" height="44.56" rx="1.23"/><rect x="405.66" y="41.35" width="2.45" height="40.10" rx="1.23"/><rect x="408.99" y="35.22" width="2.45" height="52.36" rx="1.23"/><rect x="412.31" y="12.38" width="2.45" height="98.03" rx="1.23"/><rect x="415.64" y="32.44" width="2.45" height="57.93" rx="1.23"/><rect x="418.97" y="41.07" width="2.45" height="40.66" rx="1.23"/><rect x="422.29" y="40.23" width="2.45" height="42.33" rx="1.23"/><rect x="425.62" y="32.44" width="2.45" height="57.93" rx="1.23"/><rect x="428.95" y="6.26" width="2.45" height="110.29" rx="1.23"/><rect x="432.28" y="60.73" width="2.45" height="1.34" rx="0.67"/><rect x="435.60" y="36.33" width="2.45" height="50.13" rx="1.23"/><rect x="438.93" y="36.61" width="2.45" height="49.57" rx="1.23"/><rect x="442.26" y="37.45" width="2.45" height="47.90" rx="1.23"/><rect x="445.58" y="8.15" width="2.45" height="106.50" rx="1.23"/><rect x="448.91" y="47.20" width="2.45" height="28.41" rx="1.23"/><rect x="452.24" y="34.27" width="2.45" height="54.25" rx="1.23"/><rect x="455.56" y="36.06" width="2.45" height="50.69" rx="1.23"/><rect x="458.89" y="36.61" width="2.45" height="49.57" rx="1.23"/><rect x="462.22" y="6.26" width="2.45" height="110.29" rx="1.23"/><rect x="465.55" y="10.32" width="2.45" height="102.15" rx="1.23"/><rect x="468.87" y="35.22" width="2.45" height="52.36" rx="1.23"/><rect x="472.20" y="35.22" width="2.45" height="52.36" rx="1.23"/><rect x="475.53" y="34.27" width="2.45" height="54.25" rx="1.23"/><rect x="478.85" y="11.83" width="2.45" height="99.15" rx="1.23"/><rect x="482.18" y="17.12" width="2.45" height="88.56" rx="1.23"/><rect x="485.51" y="32.44" width="2.45" height="57.93" rx="1.23"/><rect x="488.83" y="35.78" width="2.45" height="51.24" rx="1.23"/><rect x="492.16" y="36.61" width="2.45" height="49.57" rx="1.23"/><rect x="495.49" y="13.50" width="2.45" height="95.80" rx="1.23"/><rect x="498.82" y="8.15" width="2.45" height="106.50" rx="1.23"/><rect x="502.14" y="38.01" width="2.45" height="46.79" rx="1.23"/><rect x="505.47" y="39.12" width="2.45" height="44.56" rx="1.23"/><rect x="508.80" y="35.22" width="2.45" height="52.36" rx="1.23"/><rect x="512.12" y="36.06" width="2.45" height="50.69" rx="1.23"/><rect x="515.45" y="5.70" width="2.45" height="111.40" rx="1.23"/><rect x="518.78" y="31.60" width="2.45" height="59.60" rx="1.23"/><rect x="522.10" y="38.56" width="2.45" height="45.67" rx="1.23"/><rect x="525.43" y="38.56" width="2.45" height="45.67" rx="1.23"/><rect x="528.76" y="36.89" width="2.45" height="49.02" rx="1.23"/><rect x="532.09" y="11.83" width="2.45" height="99.15" rx="1.23"/><rect x="535.41" y="37.73" width="2.45" height="47.34" rx="1.23"/><rect x="538.74" y="36.33" width="2.45" height="50.13" rx="1.23"/><rect x="542.07" y="36.89" width="2.45" height="49.02" rx="1.23"/><rect x="545.39" y="38.84" width="2.45" height="45.12" rx="1.23"/><rect x="548.72" y="14.05" width="2.45" height="94.69" rx="1.23"/><rect x="552.05" y="34.11" width="2.45" height="54.59" rx="1.23"/><rect x="555.37" y="40.40" width="2.45" height="42.00" rx="1.23"/><rect x="558.70" y="37.45" width="2.45" height="47.90" rx="1.23"/><rect x="562.03" y="40.23" width="2.45" height="42.33" rx="1.23"/><rect x="565.36" y="12.94" width="2.45" height="96.92" rx="1.23"/><rect x="568.68" y="53.60" width="2.45" height="15.60" rx="1.23"/><rect x="572.01" y="32.44" width="2.45" height="57.93" rx="1.23"/><rect x="575.34" y="33.55" width="2.45" height="55.70" rx="1.23"/><rect x="578.66" y="33.55" width="2.45" height="55.70" rx="1.23"/><rect x="581.99" y="8.49" width="2.45" height="105.83" rx="1.23"/><rect x="585.32" y="22.41" width="2.45" height="77.98" rx="1.23"/><rect x="588.64" y="31.32" width="2.45" height="60.16" rx="1.23"/><rect x="591.97" y="36.89" width="2.45" height="49.02" rx="1.23"/><rect x="595.30" y="34.94" width="2.45" height="52.91" rx="1.23"/><rect x="598.63" y="12.94" width="2.45" height="96.92" rx="1.23"/><rect x="601.95" y="9.04" width="2.45" height="104.72" rx="1.23"/><rect x="605.28" y="33.55" width="2.45" height="55.70" rx="1.23"/><rect x="608.61" y="36.33" width="2.45" height="50.13" rx="1.23"/><rect x="611.93" y="37.73" width="2.45" height="47.34" rx="1.23"/><rect x="615.26" y="14.05" width="2.45" height="94.69" rx="1.23"/><rect x="618.59" y="13.22" width="2.45" height="96.36" rx="1.23"/><rect x="621.91" y="34.94" width="2.45" height="52.91" rx="1.23"/><rect x="625.24" y="41.07" width="2.45" height="40.66" rx="1.23"/><rect x="628.57" y="34.27" width="2.45" height="54.25" rx="1.23"/><rect x="631.90" y="12.94" width="2.45" height="96.92" rx="1.23"/><rect x="635.22" y="14.05" width="2.45" height="94.69" rx="1.23"/><rect x="638.55" y="32.99" width="2.45" height="56.81" rx="1.23"/><rect x="641.88" y="29.82" width="2.45" height="63.16" rx="1.23"/><rect x="645.20" y="40.23" width="2.45" height="42.33" rx="1.23"/><rect x="648.53" y="37.73" width="2.45" height="47.34" rx="1.23"/><rect x="651.86" y="14.61" width="2.45" height="93.58" rx="1.23"/><rect x="655.18" y="32.44" width="2.45" height="57.93" rx="1.23"/><rect x="658.51" y="36.89" width="2.45" height="49.02" rx="1.23"/><rect x="661.84" y="34.27" width="2.45" height="54.25" rx="1.23"/><rect x="665.17" y="32.44" width="2.45" height="57.93" rx="1.23"/><rect x="668.49" y="9.88" width="2.45" height="103.05" rx="1.23"/><rect x="671.82" y="34.11" width="2.45" height="54.59" rx="1.23"/><rect x="675.15" y="36.89" width="2.45" height="49.02" rx="1.23"/><rect x="678.47" y="36.33" width="2.45" height="50.13" rx="1.23"/><rect x="681.80" y="36.06" width="2.45" height="50.69" rx="1.23"/><rect x="685.13" y="12.38" width="2.45" height="98.03" rx="1.23"/><rect x="688.45" y="32.44" width="2.45" height="57.93" rx="1.23"/><rect x="691.78" y="34.27" width="2.45" height="54.25" rx="1.23"/><rect x="695.11" y="36.33" width="2.45" height="50.13" rx="1.23"/><rect x="698.44" y="34.27" width="2.45" height="54.25" rx="1.23"/><rect x="701.76" y="9.60" width="2.45" height="103.60" rx="1.23"/><rect x="705.09" y="50.82" width="2.45" height="21.17" rx="1.23"/><rect x="708.42" y="33.55" width="2.45" height="55.70" rx="1.23"/><rect x="711.74" y="36.89" width="2.45" height="49.02" rx="1.23"/><rect x="715.07" y="31.60" width="2.45" height="59.60" rx="1.23"/><rect x="718.40" y="9.88" width="2.45" height="103.05" rx="1.23"/><rect x="721.72" y="22.41" width="2.45" height="77.98" rx="1.23"/><rect x="725.05" y="32.99" width="2.45" height="56.81" rx="1.23"/><rect x="728.38" y="37.45" width="2.45" height="47.90" rx="1.23"/><rect x="731.71" y="35.22" width="2.45" height="52.36" rx="1.23"/><rect x="735.03" y="11.83" width="2.45" height="99.15" rx="1.23"/><rect x="738.36" y="9.88" width="2.45" height="103.05" rx="1.23"/><rect x="741.69" y="36.06" width="2.45" height="50.69" rx="1.23"/><rect x="745.01" y="36.33" width="2.45" height="50.13" rx="1.23"/><rect x="748.34" y="34.66" width="2.45" height="53.47" rx="1.23"/><rect x="751.67" y="9.88" width="2.45" height="103.05" rx="1.23"/><rect x="754.99" y="14.05" width="2.45" height="94.69" rx="1.23"/><rect x="758.32" y="31.60" width="2.45" height="59.60" rx="1.23"/><rect x="761.65" y="38.56" width="2.45" height="45.67" rx="1.23"/><rect x="764.98" y="36.61" width="2.45" height="49.57" rx="1.23"/><rect x="768.30" y="34.27" width="2.45" height="54.25" rx="1.23"/><rect x="771.63" y="9.88" width="2.45" height="103.05" rx="1.23"/><rect x="774.96" y="34.94" width="2.45" height="52.91" rx="1.23"/><rect x="778.28" y="39.12" width="2.45" height="44.56" rx="1.23"/><rect x="781.61" y="37.73" width="2.45" height="47.34" rx="1.23"/><rect x="784.94" y="34.11" width="2.45" height="54.59" rx="1.23"/><rect x="788.27" y="13.50" width="2.45" height="95.80" rx="1.23"/><rect x="791.59" y="32.44" width="2.45" height="57.93" rx="1.23"/><rect x="794.92" y="34.11" width="2.45" height="54.59" rx="1.23"/><rect x="798.25" y="37.73" width="2.45" height="47.34" rx="1.23"/><rect x="801.57" y="32.44" width="2.45" height="57.93" rx="1.23"/><rect x="804.90" y="10.71" width="2.45" height="101.37" rx="1.23"/><rect x="808.23" y="35.78" width="2.45" height="51.24" rx="1.23"/><rect x="811.55" y="38.56" width="2.45" height="45.67" rx="1.23"/><rect x="814.88" y="37.45" width="2.45" height="47.90" rx="1.23"/><rect x="818.21" y="34.27" width="2.45" height="54.25" rx="1.23"/><rect x="821.54" y="12.94" width="2.45" height="96.92" rx="1.23"/><rect x="824.86" y="50.26" width="2.45" height="22.28" rx="1.23"/><rect x="828.19" y="32.44" width="2.45" height="57.93" rx="1.23"/><rect x="831.52" y="38.84" width="2.45" height="45.12" rx="1.23"/><rect x="834.84" y="34.27" width="2.45" height="54.25" rx="1.23"/><rect x="838.17" y="7.93" width="2.45" height="106.94" rx="1.23"/><rect x="841.50" y="30.21" width="2.45" height="62.38" rx="1.23"/><rect x="844.82" y="36.06" width="2.45" height="50.69" rx="1.23"/><rect x="848.15" y="37.73" width="2.45" height="47.34" rx="1.23"/><rect x="851.48" y="37.73" width="2.45" height="47.34" rx="1.23"/><rect x="854.81" y="6.81" width="2.45" height="109.17" rx="1.23"/><rect x="858.13" y="6.26" width="2.45" height="110.29" rx="1.23"/><rect x="861.46" y="34.94" width="2.45" height="52.91" rx="1.23"/><rect x="864.79" y="39.12" width="2.45" height="44.56" rx="1.23"/><rect x="868.11" y="36.33" width="2.45" height="50.13" rx="1.23"/><rect x="871.44" y="5.70" width="2.45" height="111.40" rx="1.23"/><rect x="874.77" y="6.54" width="2.45" height="109.73" rx="1.23"/><rect x="878.09" y="36.06" width="2.45" height="50.69" rx="1.23"/><rect x="881.42" y="37.45" width="2.45" height="47.90" rx="1.23"/><rect x="884.75" y="36.06" width="2.45" height="50.69" rx="1.23"/><rect x="888.08" y="12.94" width="2.45" height="96.92" rx="1.23"/><rect x="891.40" y="18.79" width="2.45" height="85.22" rx="1.23"/><rect x="894.73" y="33.55" width="2.45" height="55.70" rx="1.23"/><rect x="898.06" y="41.07" width="2.45" height="40.66" rx="1.23"/><rect x="901.38" y="38.84" width="2.45" height="45.12" rx="1.23"/><rect x="904.71" y="35.22" width="2.45" height="52.36" rx="1.23"/><rect x="908.04" y="10.71" width="2.45" height="101.37" rx="1.23"/><rect x="911.36" y="35.22" width="2.45" height="52.36" rx="1.23"/><rect x="914.69" y="36.61" width="2.45" height="49.57" rx="1.23"/><rect x="918.02" y="41.07" width="2.45" height="40.66" rx="1.23"/><rect x="921.35" y="37.45" width="2.45" height="47.90" rx="1.23"/><rect x="924.67" y="7.65" width="2.45" height="107.50" rx="1.23"/><rect x="928.00" y="32.44" width="2.45" height="57.93" rx="1.23"/><rect x="931.33" y="43.85" width="2.45" height="35.09" rx="1.23"/><rect x="934.65" y="33.55" width="2.45" height="55.70" rx="1.23"/><rect x="937.98" y="36.33" width="2.45" height="50.13" rx="1.23"/><rect x="941.31" y="12.38" width="2.45" height="98.03" rx="1.23"/><rect x="944.63" y="37.73" width="2.45" height="47.34" rx="1.23"/><rect x="947.96" y="36.06" width="2.45" height="50.69" rx="1.23"/><rect x="951.29" y="36.89" width="2.45" height="49.02" rx="1.23"/><rect x="954.62" y="36.33" width="2.45" height="50.13" rx="1.23"/><rect x="957.94" y="16.00" width="2.45" height="90.79" rx="1.23"/><rect x="961.27" y="60.73" width="2.45" height="1.34" rx="0.67"/><rect x="964.60" y="33.55" width="2.45" height="55.70" rx="1.23"/><rect x="967.92" y="35.22" width="2.45" height="52.36" rx="1.23"/><rect x="971.25" y="36.33" width="2.45" height="50.13" rx="1.23"/><rect x="974.58" y="12.38" width="2.45" height="98.03" rx="1.23"/><rect x="977.90" y="7.65" width="2.45" height="107.50" rx="1.23"/><rect x="981.23" y="60.73" width="2.45" height="1.34" rx="0.67"/></svg>
<div class="b" style="left:323.6px;top:545.4px;width:3.4px;height:111.8px;border-radius:2px;background:#fff;"></div>
<div class="b" style="left:1316.7px;top:739.6px;width:24px;height:51.8px;border-radius:9px 0 0 9px;background:#000;"></div>
<svg class="i" style="left:1318.8px;top:755.9px" width="18.8" height="18.8" viewBox="0 0 24 24" fill="none" stroke="#fff" stroke-width="2.3" stroke-linecap="round" stroke-linejoin="round"><path d="m15 18-6-6 6-6"/></svg>
<div class="b" style="left:62px;top:41px;width:1276.4px;height:779px;border-radius:10px;box-shadow:inset 0 0 0 1px rgba(255,255,255,.36);pointer-events:none;"></div>
</div>
</body></html>
